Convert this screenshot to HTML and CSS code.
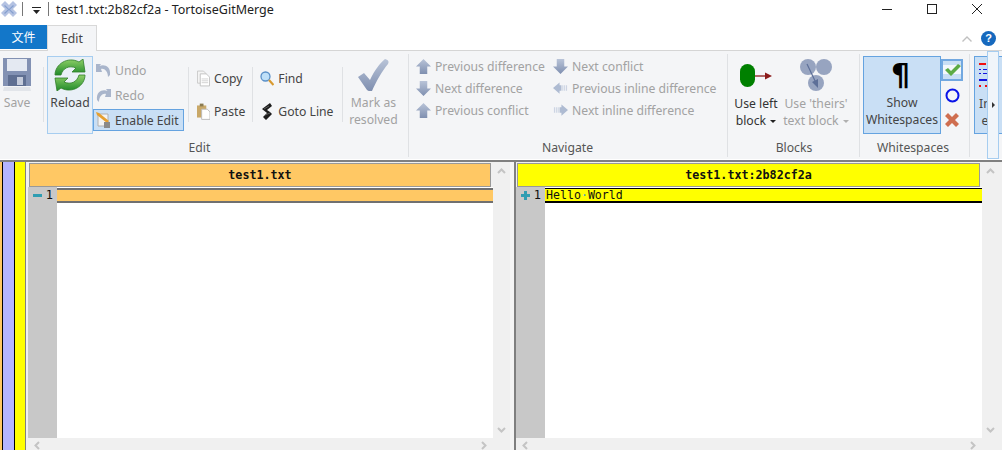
FILE: index.html
```html
<!DOCTYPE html>
<html lang="en">
<head>
<meta charset="utf-8">
<title>test1.txt:2b82cf2a - TortoiseGitMerge</title>
<link rel="stylesheet" href="styles.css">
</head>
<body>
<svg class="defs" width="0" height="0">
  <defs>
    <linearGradient id="gblue" x1="0" y1="0" x2="0" y2="1"><stop offset="0" stop-color="#b9c4d8"/><stop offset="1" stop-color="#7f8fb0"/></linearGradient>
    <linearGradient id="ggreen" x1="0" y1="0" x2="0" y2="1"><stop offset="0" stop-color="#8fd068"/><stop offset="1" stop-color="#1f8a2a"/></linearGradient>
    <symbol id="up" viewBox="0 0 16 16"><path d="M8 0 16 8H12V16H4V8H0Z" fill="url(#gblue)"/></symbol>
    <symbol id="down" viewBox="0 0 16 16"><path d="M4 0H12V8H16L8 16 0 8H4Z" fill="url(#gblue)"/></symbol>
    <symbol id="left" viewBox="0 0 16 12"><path d="M0 6 7 0V3H9V9H7V12Z" fill="#aebbd2"/><path d="M10 3H11V9H10ZM12 3H13V9H12ZM14 3H15V9H14Z" fill="#c6cfe0"/></symbol>
    <symbol id="right" viewBox="0 0 16 12"><path d="M16 6 9 0V3H7V9H9V12Z" fill="#aebbd2"/><path d="M1 3H2V9H1ZM3 3H4V9H3ZM5 3H6V9H5Z" fill="#c6cfe0"/></symbol>
  </defs>
</svg>

<header class="titlebar">
  <svg class="app-icon" width="17" height="17" viewBox="0 0 17 17"><path d="M5 0 9 4 13 0 17 4 13 8 17 12 13 16 9 12 5 16 1 12 5 8 1 4Z" fill="#b4c2e2"/><path d="M5 4 9 8 13 4 14 5 10 8.500 14 12 13 13 9 9 5 13 4 12 8 8.500 4 5Z" fill="#86a0cf"/></svg>
  <span class="qa-sep"></span>
  <svg class="qa-arrow" width="9" height="7" viewBox="0 0 9 7"><path d="M0 0H9V1H0ZM1 3H8L4.500 7Z" fill="#222"/></svg>
  <span class="qa-sep"></span>
  <span class="title">test1.txt:2b82cf2a - TortoiseGitMerge</span>
  <div class="winctl">
    <svg width="10" height="10" viewBox="0 0 10 10"><path d="M0 5.500H10" stroke="#222" fill="none"/></svg>
    <svg width="10" height="10" viewBox="0 0 10 10"><rect x=".5" y=".5" width="9" height="9" stroke="#222" fill="none"/></svg>
    <svg width="10" height="10" viewBox="0 0 10 10"><path d="M0 0 10 10M10 0 0 10" stroke="#222" fill="none"/></svg>
  </div>
</header>

<nav class="tabs">
  <span class="tab-file">文件</span>
  <span class="tab-edit">Edit</span>
  <div class="tabs-right">
    <svg width="10" height="6" viewBox="0 0 10 6"><path d="M.5 5.500 5 1 9.500 5.500" stroke="#c0c0c0" stroke-width="1.400" fill="none"/></svg>
    <span class="help">?</span>
  </div>
</nav>

<section class="ribbon">
  <div class="group g-edit">
    <div class="group-body">
      <div class="large dis w-save">
        <svg class="licon" width="30" height="33" viewBox="0 0 30 33"><path d="M1 0H29V28H1Z" fill="#8291b3"/><path d="M5 1H25V13H5Z" fill="#e4e9f2"/><path d="M6 17H24V28H6Z" fill="#5f6f92"/><path d="M15 19H21V27H15Z" fill="#c4cbdb"/><path d="M2 29H28L29 33H1Z" fill="#e2e5ea"/></svg>
        <span>Save</span>
      </div>
      <span class="sep s-save"></span>
      <div class="large on-light w-reload">
        <svg class="licon" width="32" height="32" viewBox="0 0 32 32"><path d="M1 16C1 5 14-3 25 3L29 0 31 13 18 13 22 9C15 6 9 9 7 16Z" fill="url(#ggreen)" stroke="#2f7d2a" stroke-width=".8"/><path d="M31 16C31 27 18 35 7 29L3 32 1 19 14 19 10 23C17 26 23 23 25 16Z" fill="url(#ggreen)" stroke="#2f7d2a" stroke-width=".8"/></svg>
        <span>Reload</span>
      </div>
      <div class="stack s-undo">
        <div class="small dis">
          <svg width="15" height="15" viewBox="0 0 15 15"><path d="M0 1 5 1 3.500 3C8 1 15 3 14 12L12 14C12 8 8 5 5 6L6 9H0Z" fill="#a9b5cb"/></svg><span>Undo</span>
        </div>
        <div class="small dis">
          <svg width="15" height="15" viewBox="0 0 15 15"><path d="M15 1 10 1 11.500 3C7 1 0 3 1 12L3 14C3 8 7 5 10 6L9 9H15Z" fill="#a9b5cb"/></svg><span>Redo</span>
        </div>
        <div class="small on">
          <svg width="15" height="16" viewBox="0 0 15 16"><path d="M2 2H12V14H2Z" fill="#f4f4f4" stroke="#b0b0b0"/><path d="M0 0 3 1 13 9 11 11 1 3Z" fill="#e6a030"/><path d="M8 10H14V16H8Z" fill="#8a8a8a"/></svg><span>Enable Edit</span>
        </div>
      </div>
      <span class="sep s-a"></span>
      <div class="stack2">
        <div class="small">
          <svg width="13" height="17" viewBox="0 0 14 17"><path d="M.5 .5H7L10 3.500V13.500H.5Z" fill="#f4f4f4" stroke="#c8c8c8"/><path d="M3.500 3.500H10L13.500 7V16.500H3.500Z" fill="#fff" stroke="#c0c0c0"/><path d="M5 9H12M5 11H12M5 13H12" stroke="#d0d0d0"/></svg><span>Copy</span>
        </div>
        <div class="small">
          <svg width="13" height="17" viewBox="0 0 14 17"><path d="M0 2H10V15H0Z" fill="#c9a868"/><path d="M3 0H7V3H3Z" fill="#8a7a50"/><path d="M5 6H11L14 9V17H5Z" fill="#fff" stroke="#bbb"/></svg><span>Paste</span>
        </div>
      </div>
      <span class="sep s-b"></span>
      <div class="stack2">
        <div class="small">
          <svg width="14" height="15" viewBox="0 0 14 15"><circle cx="5.500" cy="5.500" r="4.500" fill="#bfe0f8" stroke="#5a90c8" stroke-width="1.300"/><path d="M9 9 13.500 14" stroke="#d89a30" stroke-width="2.200"/></svg><span>Find</span>
        </div>
        <div class="small">
          <svg width="14" height="17" viewBox="0 0 14 17"><path d="M10 0 12 3 7 7 10 9 12 11 6 17 3 14 7 10 2 6Z" fill="#1c1c1c"/><path d="M4 6 9 3M5 12 10 10" stroke="#777" stroke-width=".7"/></svg><span>Goto Line</span>
        </div>
      </div>
      <span class="sep s-c"></span>
      <div class="large dis w-mark">
        <svg class="licon" width="32" height="34" viewBox="0 0 32 34"><path d="M1 19 7 15 13 22C17 13 23 5 28 1 32 2 32 4 31 6 25 13 19 24 15 33 12 33 11 33 10 32Z" fill="url(#gblue)"/></svg>
        <span>Mark as<br>resolved</span>
      </div>
    </div>
    <div class="group-label">Edit</div>
  </div>

  <div class="group g-nav">
    <div class="group-body nav-grid">
      <div class="small dis"><svg width="15" height="15"><use href="#up"/></svg><span>Previous difference</span></div>
      <div class="small dis"><svg width="15" height="15"><use href="#down"/></svg><span>Next conflict</span></div>
      <div class="small dis"><svg width="15" height="15"><use href="#down"/></svg><span>Next difference</span></div>
      <div class="small dis"><svg width="15" height="12"><use href="#left"/></svg><span>Previous inline difference</span></div>
      <div class="small dis"><svg width="15" height="15"><use href="#up"/></svg><span>Previous conflict</span></div>
      <div class="small dis"><svg width="15" height="12"><use href="#right"/></svg><span>Next inline difference</span></div>
    </div>
    <div class="group-label">Navigate</div>
  </div>

  <div class="group g-blocks">
    <div class="group-body">
      <div class="large w-left">
        <svg class="licon" width="32" height="24" viewBox="0 0 32 24"><rect x="0" y="0" width="15" height="23" rx="7.500" fill="#008000"/><path d="M15 12H26" stroke="#8b1a1a" stroke-width="1.300"/><path d="M25 8.500 32 12 25 15.500Z" fill="#8b1a1a"/></svg>
        <span>Use left<br>block <i class="caret"></i></span>
      </div>
      <div class="large dis w-theirs">
        <svg class="licon" width="32" height="32" viewBox="0 0 32 32"><circle cx="8" cy="8" r="8" fill="#97a4c0"/><circle cx="24" cy="8" r="8" fill="#97a4c0"/><circle cx="16" cy="24" r="8" fill="#97a4c0"/><path d="M7 5 17 26" stroke="#5d6f98" stroke-width="1.200"/><path d="M12 23 18 29 18 20Z" fill="#5d6f98"/></svg>
        <span>Use 'theirs'<br>text block <i class="caret dim"></i></span>
      </div>
    </div>
    <div class="group-label">Blocks</div>
  </div>

  <div class="group g-ws">
    <div class="group-body">
      <div class="large on w-show">
        <span class="pilcrow">¶</span>
        <span>Show<br>Whitespaces</span>
      </div>
      <div class="ws-stack">
        <span class="ws-btn on">
          <svg width="17" height="12" viewBox="0 0 17 12"><path d="M1 6 4 4 7 7 14 0 17 2 7 12Z" fill="#5cab45"/></svg>
        </span>
        <span class="ws-btn">
          <svg width="15" height="15" viewBox="0 0 15 15"><circle cx="7.500" cy="7.500" r="6" fill="none" stroke="#0a14e8" stroke-width="2"/></svg>
        </span>
        <span class="ws-btn">
          <svg width="14" height="14" viewBox="0 0 14 14"><path d="M3 0 7 4 11 0 14 3 10 7 14 11 11 14 7 10 3 14 0 11 4 7 0 3Z" fill="#cf6e50"/></svg>
        </span>
      </div>
    </div>
    <div class="group-label">Whitespaces</div>
  </div>

  <div class="group g-view">
    <div class="group-body">
      <div class="large on w-view">
        <svg class="licon" width="10" height="24" viewBox="0 0 10 24"><path d="M0 0H7V2H0Z" fill="#f01010"/><path d="M0 6H2V7H0ZM4 6H8V7H4ZM0 10H2V11H0ZM4 10H8V11H4ZM0 16H10V18H0Z" fill="#1414e0"/><path d="M0 22H2V24H0ZM6 22H8V24H6Z" fill="#f01010"/></svg>
        <span>In<br>e</span>
      </div>
    </div>
  </div>

  <div class="ribbon-next"><i></i></div>
</section>

<main class="workspace">
  <div class="locator">
    <span class="loc-a"></span><span class="loc-b"></span><span class="loc-c"></span>
  </div>
  <div class="pane left">
    <div class="pane-head">test1.txt</div>
    <div class="vscroll">
      <svg width="9" height="6" viewBox="0 0 9 6"><path d="M1 5 4.500 1.500 8 5" stroke="#c4c4c4" stroke-width="2" fill="none"/></svg>
      <svg width="9" height="6" viewBox="0 0 9 6"><path d="M1 1 4.500 4.500 8 1" stroke="#c4c4c4" stroke-width="2" fill="none"/></svg>
    </div>
    <div class="gutter">
      <div class="gutter-row">
        <svg width="9" height="9" viewBox="0 0 9 9"><path d="M0 3H9V6H0Z" fill="#2f9db2"/></svg><span>1</span>
      </div>
    </div>
    <div class="code"><div class="code-line"></div></div>
    <div class="hscroll">
      <svg width="6" height="9" viewBox="0 0 6 9"><path d="M5 1 1.500 4.500 5 8" stroke="#c4c4c4" stroke-width="2" fill="none"/></svg>
      <svg width="6" height="9" viewBox="0 0 6 9"><path d="M1 1 4.500 4.500 1 8" stroke="#c4c4c4" stroke-width="2" fill="none"/></svg>
    </div>
  </div>
  <div class="splitter"></div>
  <div class="pane right">
    <div class="pane-head">test1.txt:2b82cf2a</div>
    <div class="vscroll">
      <svg width="9" height="6" viewBox="0 0 9 6"><path d="M1 5 4.500 1.500 8 5" stroke="#c4c4c4" stroke-width="2" fill="none"/></svg>
      <svg width="9" height="6" viewBox="0 0 9 6"><path d="M1 1 4.500 4.500 8 1" stroke="#c4c4c4" stroke-width="2" fill="none"/></svg>
    </div>
    <div class="gutter">
      <div class="gutter-row">
        <svg width="9" height="9" viewBox="0 0 9 9"><path d="M3 0H6V3H9V6H6V9H3V6H0V3H3Z" fill="#2f9db2"/></svg><span>1</span>
      </div>
    </div>
    <div class="code"><div class="code-line">Hello<b>·</b>World</div></div>
    <div class="hscroll">
      <svg width="6" height="9" viewBox="0 0 6 9"><path d="M5 1 1.500 4.500 5 8" stroke="#c4c4c4" stroke-width="2" fill="none"/></svg>
      <svg width="6" height="9" viewBox="0 0 6 9"><path d="M1 1 4.500 4.500 1 8" stroke="#c4c4c4" stroke-width="2" fill="none"/></svg>
    </div>
  </div>
</main>
</body>
</html>
```

FILE: styles.css
```css
* { box-sizing: border-box; }
html, body { margin: 0; padding: 0; }
body {
  width: 1002px; height: 450px; overflow: hidden; background: #fff;
  font-family: "Noto Sans", "Noto Sans CJK SC", sans-serif;
  font-size: 12.2px; color: #444;
  display: flex; flex-direction: column;
}
.defs { position: absolute; }

/* title bar */
.titlebar { height: 25px; flex: none; display: flex; align-items: center; padding-bottom: 7px; }
.qa-sep { width: 1px; height: 14px; background: #777; margin-left: 5px; }
.qa-arrow { margin: 2px 2px 0 9px; }
.title { margin-left: 7px; font-size: 12.5px; color: #222; }
.winctl { margin-left: auto; display: flex; gap: 35px; padding-right: 20px; }
.winctl svg { display: block; }

/* tabs */
.tabs { height: 26px; flex: none; display: flex; align-items: flex-start; border-bottom: 1px solid #d5d5d5; }
.tab-file { width: 47px; height: 24px; background: #1377c9; color: #fff; display: flex; align-items: center; justify-content: center; font-size: 12px; }
.tab-edit { width: 50px; height: 26px; background: #f4f5f7; border: 1px solid #d8d8d8; border-bottom: 0; display: flex; align-items: center; justify-content: center; color: #444; }
.tabs-right { margin-left: auto; display: flex; align-items: center; gap: 9px; padding-right: 6px; padding-top: 6px; }
.help { width: 15px; height: 15px; border-radius: 50%; background: #1669be; color: #fff; font: bold 11px/15px "Liberation Sans", sans-serif; text-align: center; }

/* ribbon */
.ribbon { height: 108px; flex: none; background: #f4f5f7; display: flex; overflow: hidden; position: relative; }
.group { flex: none; display: flex; flex-direction: column; position: relative; padding-top: 5px; }
.group::after { content: ""; position: absolute; right: 0; top: 3px; bottom: 2px; width: 1px; background: #dfe1e4; }
.g-edit { width: 409px; }
.g-nav { width: 319px; }
.g-blocks { width: 132px; }
.g-ws { width: 110px; }
.g-view { width: 32px; }
.g-view::after { display: none; }
.group-body { height: 78px; display: flex; flex: none; }
.group-label { flex: none; text-align: center; line-height: 26px; padding-top: 1px; color: #555; padding-right: 10px; }
.g-nav .group-label { padding-right: 2px; }
.g-blocks .group-label { padding-right: 0; }
.g-ws .group-label { padding-right: 4px; }

.large { flex: none; display: flex; flex-direction: column; align-items: center; text-align: center; line-height: 17px; border: 1px solid transparent; }
.large .licon { display: block; flex: none; }
.dis { color: #a2a2a2; }
.on { background: #c9dff5; border: 1px solid #65a3e0; }
.on-light { background: #e9f0f7; border-color: #a6cdf0; }

.w-save { width: 40px; margin-left: -3px; padding-top: 1px; }
.w-save .licon { margin-bottom: 3px; }
.w-reload { width: 46px; padding-top: 2px; color: #444; }
.w-reload .licon { margin-bottom: 3px; }
.w-mark { width: 60px; padding-top: 1px; }
.w-mark .licon { margin-bottom: 2px; }
.sep { width: 1px; height: 55px; background: #dfe1e4; margin-top: 11px; flex: none; }
.s-save { margin: 11px 3px 0 6px; }
.s-a { margin: 11px 8px 0 4px; }
.s-b { margin: 11px 7px 0 7px; }
.s-c { margin: 11px 0 0 9px; }

.small { display: flex; align-items: center; gap: 4px; white-space: nowrap; height: 22px; }
.small svg { flex: none; }
.stack { display: flex; flex-direction: column; padding-top: 3px; gap: 3px; width: 91px; }
.stack .small { padding-left: 3px; }
.stack .small.on { padding-left: 2px; }
.stack2 { display: flex; flex-direction: column; padding-top: 11px; gap: 11px; }

.nav-grid { display: grid; grid-template-columns: 137px 1fr; grid-auto-rows: 22px; margin: -1px 0 1px; padding: 0 0 0 7px; }

.w-left { width: 58px; margin-left: -1px; padding-top: 7px; color: #333; }
.w-left .licon { margin-bottom: 7px; }
.w-theirs { width: 62px; padding-top: 2px; white-space: nowrap; }
.w-theirs .licon { margin-bottom: 4px; }
.caret { display: inline-block; border: 3px solid transparent; border-top: 3px solid #222; border-bottom: 0; vertical-align: 2px; margin-left: 1px; }
.caret.dim { border-top-color: #b0b0b0; }

.g-ws .group-body { padding-left: 3px; }
.w-show { width: 78px; }
.pilcrow { font: bold 30px/36px "DejaVu Sans", sans-serif; color: #000; height: 37px; margin-right: 3px; }
.ws-stack { display: flex; flex-direction: column; align-items: center; gap: 3px; width: 22px; padding-top: 3px; }
.ws-btn { height: 22px; width: 22px; display: flex; align-items: center; justify-content: center; }
.ws-btn.on { background: linear-gradient(#c9dff5 20%, #f4f8fc 20%, #f4f8fc 75%, #c9dff5 75%); border: 2px solid #72a8e0; }

.g-view .group-body { padding-left: 4px; }
.w-view { width: 40px; align-items: flex-start; padding: 6px 0 0 4px; }
.w-view .licon { margin-bottom: 8px; }
.ribbon-next { position: absolute; right: 3px; top: 0; bottom: 0; width: 12px; background: #f0f5fa; border: 1px solid #a6cdf0; display: flex; align-items: center; justify-content: center; }
.ribbon-next i { border: 3px solid transparent; border-left: 3px solid #333; border-right: 0; }

/* editor */
.workspace { flex: 1; min-height: 0; display: flex; background: #f0f0f0; border-top: 2px solid #808080; margin-top: 1px; }
.locator { width: 26px; flex: none; display: flex; background: #000; border-right: 1px solid #808080; }
.loc-a { width: 2px; background: #ffc864; }
.loc-b { width: 11px; margin-left: 1px; background: #b4b4ff; }
.loc-c { width: 10px; margin-left: 1px; background: #ff0; }
.pane { display: grid; grid-template-columns: 29px 1fr 17px; grid-template-rows: 24px 1fr 12px; flex: none; }
.pane.left { width: 482px; margin-left: 2px; padding-top: 1px; }
.pane.right { width: 483px; padding-top: 1px; }
.splitter { width: 6px; flex: none; border-right: 2px solid #808080; background: #f5f5f5; }
.pane-head { grid-column: 1 / 3; height: 24px; border: 1px solid #fff; margin: 0 2px 0 1px;
  font: bold 11.7px/22px "DejaVu Sans Mono", monospace; text-align: center; color: #111; outline: 1px solid #999; outline-offset: -1px; }
.left .pane-head { background: #ffc864; }
.right .pane-head { background: #ff0; }
.vscroll { grid-row: 1 / 3; grid-column: 3; background: #f0f0f0; display: flex; flex-direction: column; justify-content: space-between; align-items: center; padding: 5px 0; }
.gutter { background: #c8c8c8; grid-column: 1; grid-row: 2; padding-top: 1px; }
.gutter-row { height: 14px; display: flex; justify-content: space-between; align-items: center; padding: 0 4px 0 5px; font: 12px/14px "DejaVu Sans Mono", monospace; color: #111; }
.code { background: #fff; grid-column: 2; grid-row: 2; padding-top: 1px; }
.code-line { height: 15px; font: 11.6px/13px "DejaVu Sans Mono", monospace; color: #111; }
.code-line b { color: #4aa0c0; font-weight: normal; }
.left .code-line { background: #ffc864; border-top: 2px solid #707070; border-bottom: 2px solid #707070; }
.right .code-line { background: #ff0; border-top: 1px solid #000; border-bottom: 2px solid #000; padding-left: 1px; }
.hscroll { grid-column: 1 / 4; grid-row: 3; background: #f0f0f0; display: flex; justify-content: space-between; align-items: center; padding: 3px 23px 0 6px; }
```
